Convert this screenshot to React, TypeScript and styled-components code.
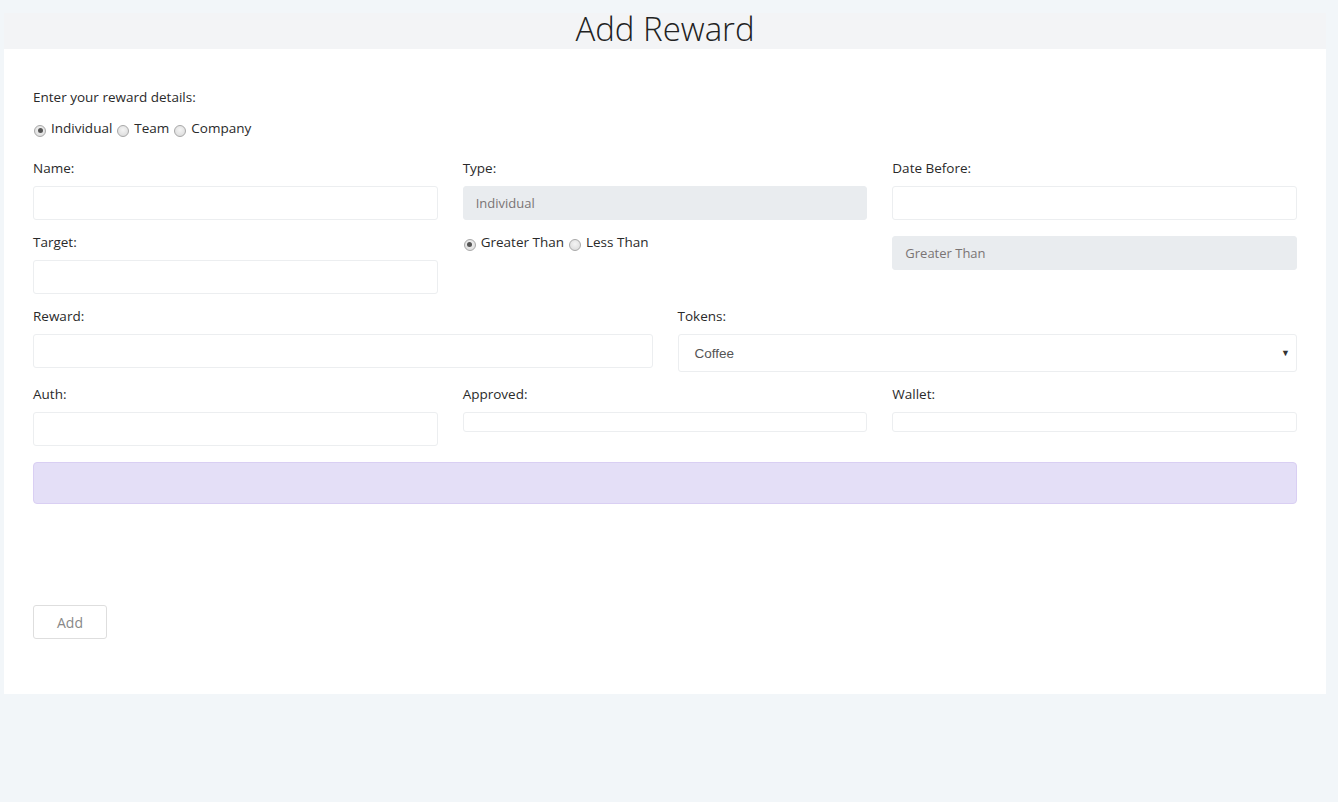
import React from "react";
import styled, { createGlobalStyle } from "styled-components";

const Global = createGlobalStyle`
  html, body { margin: 0; padding: 0; background: #f2f6f9; }
  body { font-family: "Open Sans", "DejaVu Sans", sans-serif; color: #2a2a2a; }
  * { box-sizing: border-box; }
`;

const Page = styled.div`
  padding: 13px 12px 108px 4px;
  min-height: 802px;
`;

const HeaderBand = styled.div`
  height: 36px;
  background: #f3f4f6;
  display: flex;
  align-items: center;
  justify-content: center;
`;

const Title = styled.h1`
  margin: 0;
  font-size: 33px;
  font-weight: 300;
  color: #222;
  line-height: 36px;
  transform: translate(0px, -2px);
`;

const Card = styled.div`
  background: #fff;
  padding: 38px 29px 55px 29px;
`;

const Intro = styled.div`
  font-size: 13.5px;
  line-height: 20px;
  margin-bottom: 11px;
`;

const RadioRow = styled.div<{ $mb?: number }>`
  display: flex;
  align-items: center;
  font-size: 13.5px;
  line-height: 20px;
  margin-bottom: ${(p) => p.$mb ?? 0}px;
`;

const RadioLabel = styled.label`
  display: inline-flex;
  align-items: center;
  margin-right: 4px;
`;

const RadioDot = styled.span<{ $on?: boolean }>`
  width: 12px;
  height: 12px;
  border-radius: 50%;
  border: 1px solid #a8a8a8;
  background: radial-gradient(circle at 50% 40%, #f4f4f4 0%, #d8d8d8 100%);
  margin: 5px 5px 0 1px;
  position: relative;
  flex: none;
  &::after {
    content: "";
    display: ${(p) => (p.$on ? "block" : "none")};
    position: absolute;
    left: 2.5px;
    top: 2.5px;
    width: 5px;
    height: 5px;
    border-radius: 50%;
    background: #555;
  }
`;

const Grid = styled.div<{ $cols: number }>`
  display: grid;
  grid-template-columns: repeat(${(p) => p.$cols}, 1fr);
  column-gap: 25px;
  align-items: start;
  margin-bottom: 12px;
`;

const Field = styled.div<{ $mt?: number }>`
  display: flex;
  flex-direction: column;
  margin-top: ${(p) => p.$mt ?? 0}px;
`;

const Label = styled.div`
  font-size: 13.5px;
  line-height: 20px;
  margin-bottom: 8px;
  color: #2a2a2a;
`;

const Input = styled.div<{ $h?: number; $disabled?: boolean }>`
  height: ${(p) => p.$h ?? 34}px;
  border: 1px solid ${(p) => (p.$disabled ? "#e9ecef" : "#eceef0")};
  background: ${(p) => (p.$disabled ? "#e9ecef" : "#fff")};
  border-radius: 3px;
  font-size: 13px;
  color: #7a7474;
  display: flex;
  align-items: center;
  padding: 0 12px;
`;

const Select = styled.div`
  height: 38px;
  border: 1px solid #eceef0;
  border-radius: 3px;
  display: flex;
  align-items: center;
  justify-content: space-between;
  padding: 0 6px 0 16px;
  font-family: "Liberation Sans", Arial, sans-serif;
  font-size: 13.5px;
  color: #555;
`;

const Caret = styled.span`
  font-size: 9px;
  color: #333;
`;

const Alert = styled.div`
  height: 42px;
  background: #e4dff7;
  border: 1px solid #d9cff3;
  border-radius: 4px;
  margin-top: 16px;
  margin-bottom: 101px;
`;

const Button = styled.button`
  width: 74px;
  height: 34px;
  background: #fff;
  border: 1px solid #dedede;
  border-radius: 3px;
  font-family: "Open Sans", sans-serif;
  font-size: 14px;
  color: #888;
  display: block;
`;

function Radio({ on, children }: { on?: boolean; children: React.ReactNode }) {
  return (
    <RadioLabel>
      <RadioDot $on={on} />
      {children}
    </RadioLabel>
  );
}

export default function App() {
  return (
    <>
      <Global />
      <Page>
        <HeaderBand>
          <Title>Add Reward</Title>
        </HeaderBand>
        <Card>
          <Intro>Enter your reward details:</Intro>
          <RadioRow $mb={20}>
            <Radio on>Individual</Radio>
            <Radio>Team</Radio>
            <Radio>Company</Radio>
          </RadioRow>

          <Grid $cols={3}>
            <Field>
              <Label>Name:</Label>
              <Input />
            </Field>
            <Field>
              <Label>Type:</Label>
              <Input $disabled>Individual</Input>
            </Field>
            <Field>
              <Label>Date Before:</Label>
              <Input />
            </Field>
          </Grid>

          <Grid $cols={3}>
            <Field>
              <Label>Target:</Label>
              <Input />
            </Field>
            <Field $mt={0}>
              <RadioRow>
                <Radio on>Greater Than</Radio>
                <Radio>Less Than</Radio>
              </RadioRow>
            </Field>
            <Field $mt={4}>
              <Input $disabled>Greater Than</Input>
            </Field>
          </Grid>

          <Grid $cols={2}>
            <Field>
              <Label>Reward:</Label>
              <Input />
            </Field>
            <Field>
              <Label>Tokens:</Label>
              <Select>
                <span>Coffee</span>
                <Caret>▼</Caret>
              </Select>
            </Field>
          </Grid>

          <Grid $cols={3}>
            <Field>
              <Label>Auth:</Label>
              <Input />
            </Field>
            <Field>
              <Label>Approved:</Label>
              <Input $h={20} />
            </Field>
            <Field>
              <Label>Wallet:</Label>
              <Input $h={20} />
            </Field>
          </Grid>

          <Alert />
          <Button>Add</Button>
        </Card>
      </Page>
    </>
  );
}
